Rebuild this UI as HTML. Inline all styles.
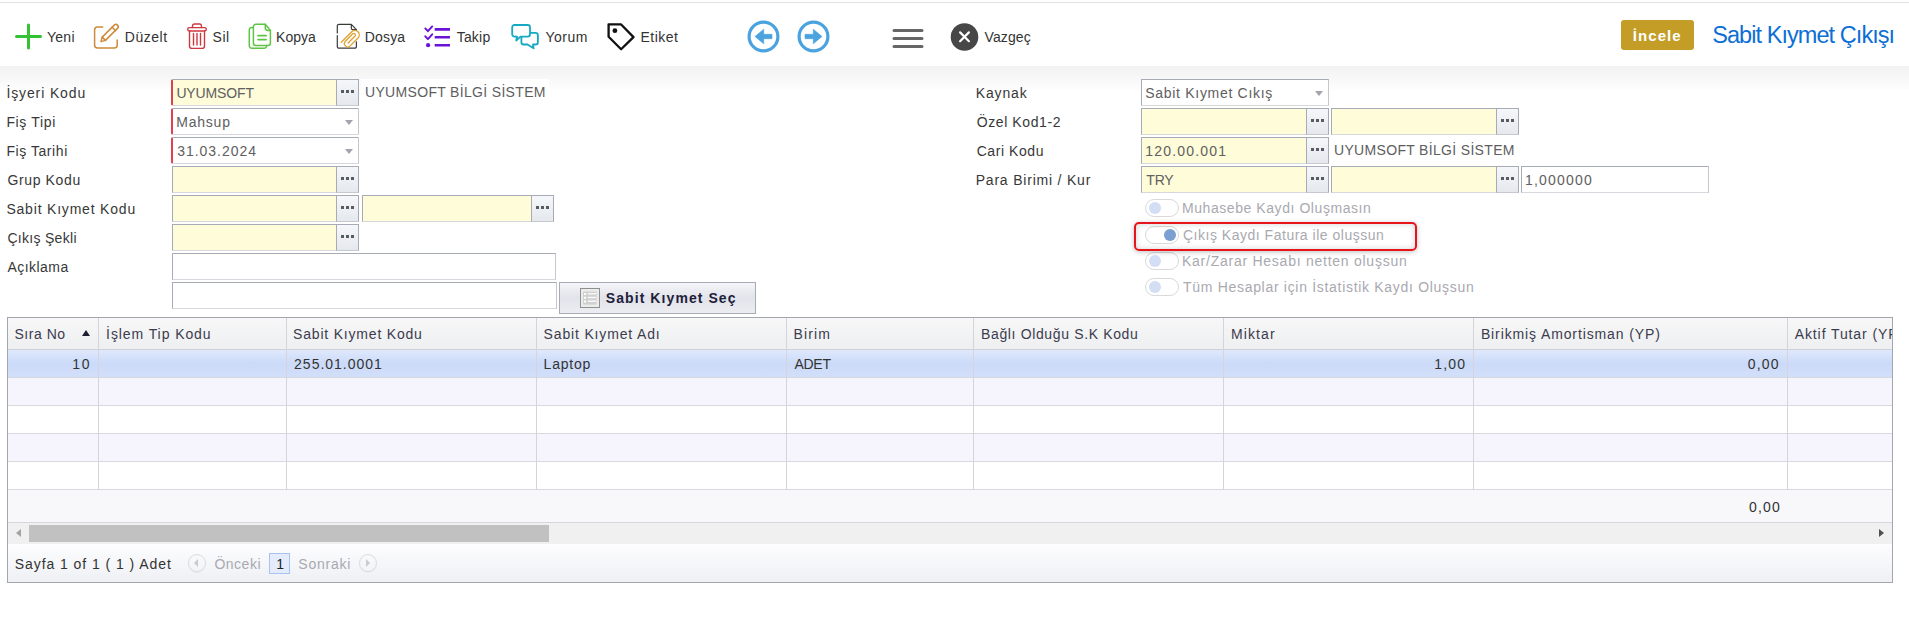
<!DOCTYPE html>
<html><head><meta charset="utf-8">
<style>
*{box-sizing:border-box;margin:0;padding:0}
html,body{width:1909px;height:630px;overflow:hidden;background:#fff;font-family:"Liberation Sans",sans-serif}
.a{position:absolute}
.t{position:absolute;white-space:nowrap}
.fld{position:absolute;height:27px;border:1px solid #a7abb5;border-bottom-color:#d6d8de;border-right-color:#c4c7ce;background:#fff}
.y{background:#fefcd9}
.req{border-left:2px solid #e0414f;border-radius:2px 0 0 2px}
.btn{position:absolute;top:-1px;right:-1px;width:23px;height:27px;border:1px solid #a7abb5;border-bottom-color:#c6c9cf;background:linear-gradient(#f5f7fa,#e5e8ed)}
.btn i{position:absolute;top:10px;width:3px;height:3px;background:#575c64}
.arr{position:absolute;right:5px;top:11px;width:0;height:0;border-left:4px solid transparent;border-right:4px solid transparent;border-top:5px solid #a2a4ab}
.col{position:absolute;top:318px;width:1px;height:172px;background:#d4d5da}
.tg{position:absolute;left:1145px;width:34px;height:18px;border:1px solid #d9d9d9;border-radius:9px;background:#fff}
.tg i{position:absolute;top:2px;left:3px;width:12px;height:12px;border-radius:6px;background:#d3def5}
</style></head><body>
<div class="a" style="left:0px;top:2px;width:1909px;height:1px;background:#e0e2e0"></div>
<div class="a" style="left:0px;top:66px;width:1909px;height:24px;background:linear-gradient(#f2f2f2,#fdfdfd)"></div>
<svg class="a" style="left:14px;top:22px" width="29" height="29" viewBox="0 0 29 29"><path d="M14.5 3v23M2.5 14.5h24" stroke="#33c233" stroke-width="3" stroke-linecap="round"/></svg>
<div class="t" style="left:47.0px;top:30.1px;font-size:14px;line-height:14px;color:#333;font-weight:normal;letter-spacing:0.267px;">Yeni</div>
<svg class="a" style="left:92px;top:22px" width="30" height="30" viewBox="0 0 30 30" fill="none" stroke="#cd8a3a" stroke-width="1.5" stroke-linecap="round" stroke-linejoin="round"><path d="M10.7 4.9H5.6A3 3 0 0 0 2.6 7.9V23A3 3 0 0 0 5.6 26H22.2A3 3 0 0 0 25.2 23V18"/><path d="M9 19.6L10.2 15.14L22.22 3.12A2.3 2.3 0 0 1 25.48 6.38L13.46 18.4Z"/><path d="M20.1 5.24L23.36 8.5M10.2 15.14L13.46 18.4"/></svg>
<div class="t" style="left:124.8px;top:30.1px;font-size:14px;line-height:14px;color:#333;font-weight:normal;letter-spacing:0.52px;">Düzelt</div>
<svg class="a" style="left:186px;top:23px" width="22" height="27" viewBox="0 0 22 27" fill="none" stroke="#cc3a40" stroke-width="1.4" stroke-linejoin="round" stroke-linecap="round"><rect x="1.7" y="4.6" width="18.6" height="3.4" rx="1.7"/><path d="M6.5 4.6V3A2 2 0 0 1 8.5 1H14A2 2 0 0 1 15.5 3V4.6"/><path d="M3.5 8V23A2.4 2.4 0 0 0 5.9 25.4H16.1A2.4 2.4 0 0 0 18.5 23V8"/><path d="M7.5 10.5V22M11 10.5V22M14.5 10.5V22"/></svg>
<div class="t" style="left:212.6px;top:30.1px;font-size:14px;line-height:14px;color:#333;font-weight:normal;letter-spacing:0.5px;">Sil</div>
<svg class="a" style="left:248px;top:23px" width="25" height="27" viewBox="0 0 25 27" fill="none" stroke="#5ec444" stroke-width="1.5" stroke-linejoin="round" stroke-linecap="round"><path d="M5.4 4.6H3.8A2.5 2.5 0 0 0 1.3 7.1V22.7A2.5 2.5 0 0 0 3.8 25.2H16.1A2.5 2.5 0 0 0 18.6 22.7V22.4"/><path d="M7.9 1.3H17.3L22.4 7.4V19.9A2.5 2.5 0 0 1 19.9 22.4H7.9A2.5 2.5 0 0 1 5.4 19.9V3.8A2.5 2.5 0 0 1 7.9 1.3Z"/><path d="M17.3 1.3V5A2.4 2.4 0 0 0 19.7 7.4H22.4"/><path d="M10 12.7H18.1M10 16.6H18.1" stroke-width="1.7"/></svg>
<div class="t" style="left:276.0px;top:30.1px;font-size:14px;line-height:14px;color:#333;font-weight:normal;letter-spacing:0.05px;">Kopya</div>
<svg class="a" style="left:336px;top:23px" width="25" height="27" viewBox="0 0 25 27" fill="none" stroke-linecap="round" stroke-linejoin="round"><path d="M1.3 10V3A1.7 1.7 0 0 1 3 1.3H15.3L20.4 6.6V7.5M1.3 12.5V23.5A1.7 1.7 0 0 0 3 25.2H18.7A1.7 1.7 0 0 0 20.4 23.5V18.8M15.3 1.3V5A1.6 1.6 0 0 0 16.9 6.6H20.4" stroke="#3a3a3a" stroke-width="1.2"/><path d="M5.23 19.23L15.77 8.7A4.45 4.45 0 0 1 22.06 14.99L14.14 22.91A3.35 3.35 0 0 1 9.4 18.17L16.76 10.82A1.6 1.6 0 0 1 19.02 13.08L12.09 20.01" stroke="#e0a030" stroke-width="1.3"/></svg>
<div class="t" style="left:364.8px;top:30.1px;font-size:14px;line-height:14px;color:#333;font-weight:normal;letter-spacing:0.15px;">Dosya</div>
<svg class="a" style="left:424px;top:25px" width="27" height="23" viewBox="0 0 27 23" fill="none" stroke="#6a12d8"><path d="M10.7 4.4H26M10.7 12.3H26M10.7 20.2H26" stroke-width="2.6"/><path d="M1.3 3.4L3.9 6.2L8.2 1.4M1.3 11.3L3.9 14.1L8.2 9.3" stroke-width="1.9" stroke-linecap="round" stroke-linejoin="round"/><circle cx="4.1" cy="20.2" r="2.1" fill="#6a12d8" stroke="none"/></svg>
<div class="t" style="left:456.7px;top:30.1px;font-size:14px;line-height:14px;color:#333;font-weight:normal;letter-spacing:0.2px;">Takip</div>
<svg class="a" style="left:510px;top:23px" width="30" height="27" viewBox="0 0 30 27" fill="#fff" stroke="#14aac1" stroke-width="1.8" stroke-linejoin="round"><path d="M13.7 9.8H25.6A2.3 2.3 0 0 1 27.9 12.1V19.2A2.3 2.3 0 0 1 25.6 21.5H23L23.6 25.3L17.5 21.5H13.7A2.3 2.3 0 0 1 11.4 19.2V12.1A2.3 2.3 0 0 1 13.7 9.8Z"/><path d="M4.5 2H17.7A2.3 2.3 0 0 1 20 4.3V11.3A2.3 2.3 0 0 1 17.7 13.6H10.5L6.2 17.5L7 13.6H4.5A2.3 2.3 0 0 1 2.2 11.3V4.3A2.3 2.3 0 0 1 4.5 2Z"/></svg>
<div class="t" style="left:545.5px;top:30.1px;font-size:14px;line-height:14px;color:#333;font-weight:normal;letter-spacing:0.475px;">Yorum</div>
<svg class="a" style="left:606px;top:22px" width="30" height="30" viewBox="0 0 30 30" fill="none" stroke="#111" stroke-width="2.3" stroke-linejoin="round"><path d="M2.6 2.3H14.9L27.5 15.1L15.1 27.3L2.6 14.8Z"/><circle cx="8.9" cy="8.7" r="2.4" fill="#111" stroke="none"/></svg>
<div class="t" style="left:640.5px;top:30.1px;font-size:14px;line-height:14px;color:#333;font-weight:normal;letter-spacing:0.5px;">Etiket</div>
<svg class="a" style="left:746px;top:19px" width="35" height="35" viewBox="0 0 35 35"><circle cx="17.5" cy="17.5" r="14.4" fill="none" stroke="#4aa3df" stroke-width="3.2"/><path d="M9 17.5L17.7 10.2V15.3H26V19.7H17.7V24.8Z" fill="#4aa3df" stroke="#4aa3df" stroke-width="0.6" stroke-linejoin="round"/></svg>
<svg class="a" style="left:796px;top:19px" width="35" height="35" viewBox="0 0 35 35"><circle cx="17.5" cy="17.5" r="14.4" fill="none" stroke="#4aa3df" stroke-width="3.2"/><path d="M26 17.5L17.3 10.2V15.3H9V19.7H17.3V24.8Z" fill="#4aa3df" stroke="#4aa3df" stroke-width="0.6" stroke-linejoin="round"/></svg>
<svg class="a" style="left:892px;top:28px" width="32" height="21" viewBox="0 0 32 21" stroke="#666" stroke-width="3" stroke-linecap="round"><path d="M2 2.5h28M2 10.5h28M2 18.5h28"/></svg>
<svg class="a" style="left:950px;top:23px" width="29" height="29" viewBox="0 0 29 29"><circle cx="14.5" cy="14" r="13.8" fill="#474747"/><path d="M10.1 9.4L18.9 18.2M18.9 9.4L10.1 18.2" stroke="#fff" stroke-width="2.2" stroke-linecap="round"/></svg>
<div class="t" style="left:984.6px;top:30.1px;font-size:14px;line-height:14px;color:#333;font-weight:normal;letter-spacing:0.08px;">Vazgeç</div>
<div class="a" style="left:1621px;top:20px;width:73px;height:30px;background:#c49d27;border-radius:3px"></div>
<div class="t" style="left:1632.8px;top:28.4px;font-size:15px;line-height:15px;color:#fff;font-weight:bold;letter-spacing:1.06px;">İncele</div>
<div class="t" style="left:1712.2px;top:23.9px;font-size:23.5px;line-height:23.5px;color:#0c6fd5;font-weight:normal;letter-spacing:-0.936px;">Sabit Kıymet Çıkışı</div>
<div class="t" style="left:6.4px;top:86.1px;font-size:14px;line-height:14px;color:#383838;font-weight:normal;letter-spacing:0.88px;">İşyeri Kodu</div>
<div class="t" style="left:6.4px;top:115.1px;font-size:14px;line-height:14px;color:#383838;font-weight:normal;letter-spacing:0.651px;">Fiş Tipi</div>
<div class="t" style="left:6.4px;top:144.1px;font-size:14px;line-height:14px;color:#383838;font-weight:normal;letter-spacing:0.566px;">Fiş Tarihi</div>
<div class="t" style="left:7.4px;top:173.1px;font-size:14px;line-height:14px;color:#383838;font-weight:normal;letter-spacing:0.638px;">Grup Kodu</div>
<div class="t" style="left:6.4px;top:202.1px;font-size:14px;line-height:14px;color:#383838;font-weight:normal;letter-spacing:0.804px;">Sabit Kıymet Kodu</div>
<div class="t" style="left:7.4px;top:231.1px;font-size:14px;line-height:14px;color:#383838;font-weight:normal;letter-spacing:0.3px;">Çıkış Şekli</div>
<div class="t" style="left:7.4px;top:260.1px;font-size:14px;line-height:14px;color:#383838;font-weight:normal;letter-spacing:0.465px;">Açıklama</div>
<div class="fld y req" style="left:171px;top:79px;width:188px"><div class="btn"><i style="left:4px"></i><i style="left:9px"></i><i style="left:14px"></i></div></div>
<div class="t" style="left:176.4px;top:85.9px;font-size:14px;line-height:14px;color:#606060;font-weight:normal;letter-spacing:-0.142px;">UYUMSOFT</div>
<div class="a" style="left:361px;top:79px;width:188px;height:14px;background:#fff"></div>
<div class="t" style="left:365.0px;top:85.1px;font-size:14px;line-height:14px;color:#5e5e5e;font-weight:normal;letter-spacing:0.325px;">UYUMSOFT BİLGİ SİSTEM</div>
<div class="fld req" style="left:171px;top:108px;width:188px"><div class="arr"></div></div>
<div class="t" style="left:176.2px;top:114.9px;font-size:14px;line-height:14px;color:#606060;font-weight:normal;letter-spacing:0.8px;">Mahsup</div>
<div class="fld req" style="left:171px;top:137px;width:188px"><div class="arr"></div></div>
<div class="t" style="left:177.2px;top:143.9px;font-size:14px;line-height:14px;color:#606060;font-weight:normal;letter-spacing:0.97px;">31.03.2024</div>
<div class="fld y" style="left:172px;top:166px;width:187px"><div class="btn"><i style="left:4px"></i><i style="left:9px"></i><i style="left:14px"></i></div></div>
<div class="fld y" style="left:172px;top:195px;width:187px"><div class="btn"><i style="left:4px"></i><i style="left:9px"></i><i style="left:14px"></i></div></div>
<div class="fld y" style="left:362px;top:195px;width:192px"><div class="btn"><i style="left:4px"></i><i style="left:9px"></i><i style="left:14px"></i></div></div>
<div class="fld y" style="left:172px;top:224px;width:187px"><div class="btn"><i style="left:4px"></i><i style="left:9px"></i><i style="left:14px"></i></div></div>
<div class="fld " style="left:172px;top:253px;width:384px"></div>
<div class="fld " style="left:172px;top:282px;width:385px"></div>
<div class="a" style="left:559px;top:282px;width:197px;height:32px;border:1px solid #a7abb5;background:linear-gradient(#f4f5f8,#e2e4eb 50%,#ebedf1)"></div>
<svg class="a" style="left:580px;top:288px" width="20" height="20" viewBox="0 0 20 20"><rect x="0.5" y="0.5" width="19" height="19" fill="#ececec" stroke="#8f8f8f"/><rect x="3" y="3.6" width="13.6" height="13" fill="#d0d0d0"/><path d="M4 6h2.1M4 9.8h2.1M4 13.6h2.1" stroke="#fff" stroke-width="2"/><path d="M7.8 5.7h8.3M7.8 9.5h8.3M7.8 13.3h8.3" stroke="#f8f8f8" stroke-width="1.5"/></svg>
<div class="t" style="left:605.8px;top:291.2px;font-size:14px;line-height:14px;color:#1e1e3a;font-weight:bold;letter-spacing:1.075px;">Sabit Kıymet Seç</div>
<div class="t" style="left:975.7px;top:86.1px;font-size:14px;line-height:14px;color:#383838;font-weight:normal;letter-spacing:0.86px;">Kaynak</div>
<div class="t" style="left:976.7px;top:115.1px;font-size:14px;line-height:14px;color:#383838;font-weight:normal;letter-spacing:0.6px;">Özel Kod1-2</div>
<div class="t" style="left:976.7px;top:144.1px;font-size:14px;line-height:14px;color:#383838;font-weight:normal;letter-spacing:0.563px;">Cari Kodu</div>
<div class="t" style="left:975.7px;top:173.1px;font-size:14px;line-height:14px;color:#383838;font-weight:normal;letter-spacing:0.798px;">Para Birimi / Kur</div>
<div class="fld " style="left:1141px;top:79px;width:188px"><div class="arr"></div></div>
<div class="t" style="left:1145.3px;top:85.9px;font-size:14px;line-height:14px;color:#606060;font-weight:normal;letter-spacing:0.697px;">Sabit Kıymet Cıkış</div>
<div class="fld y" style="left:1141px;top:108px;width:188px"><div class="btn"><i style="left:4px"></i><i style="left:9px"></i><i style="left:14px"></i></div></div>
<div class="fld y" style="left:1331px;top:108px;width:188px"><div class="btn"><i style="left:4px"></i><i style="left:9px"></i><i style="left:14px"></i></div></div>
<div class="fld y" style="left:1141px;top:137px;width:188px"><div class="btn"><i style="left:4px"></i><i style="left:9px"></i><i style="left:14px"></i></div></div>
<div class="t" style="left:1145.3px;top:143.9px;font-size:14px;line-height:14px;color:#606060;font-weight:normal;letter-spacing:1.187px;">120.00.001</div>
<div class="t" style="left:1334.0px;top:143.1px;font-size:14px;line-height:14px;color:#5e5e5e;font-weight:normal;letter-spacing:0.325px;">UYUMSOFT BİLGİ SİSTEM</div>
<div class="fld y" style="left:1141px;top:166px;width:188px"><div class="btn"><i style="left:4px"></i><i style="left:9px"></i><i style="left:14px"></i></div></div>
<div class="t" style="left:1146.3px;top:172.9px;font-size:14px;line-height:14px;color:#606060;font-weight:normal;letter-spacing:-0.2px;">TRY</div>
<div class="fld y" style="left:1331px;top:166px;width:188px"><div class="btn"><i style="left:4px"></i><i style="left:9px"></i><i style="left:14px"></i></div></div>
<div class="fld " style="left:1521px;top:166px;width:188px"></div>
<div class="t" style="left:1525.0px;top:172.9px;font-size:14px;line-height:14px;color:#606060;font-weight:normal;letter-spacing:1.202px;">1,000000</div>
<div class="tg" style="top:199px"><i></i></div>
<div class="t" style="left:1182.0px;top:200.6px;font-size:14px;line-height:14px;color:#a9a9b0;font-weight:normal;letter-spacing:0.564px;">Muhasebe Kaydı Oluşmasın</div>
<div class="tg" style="top:226px"><i style="left:18px;background:#7a9fd1"></i></div>
<div class="t" style="left:1183.0px;top:228.1px;font-size:14px;line-height:14px;color:#a9a9b0;font-weight:normal;letter-spacing:0.513px;">Çıkış Kaydı Fatura ile oluşsun</div>
<div class="tg" style="top:252px"><i></i></div>
<div class="t" style="left:1182.0px;top:253.9px;font-size:14px;line-height:14px;color:#a9a9b0;font-weight:normal;letter-spacing:0.746px;">Kar/Zarar Hesabı netten oluşsun</div>
<div class="tg" style="top:278px"><i></i></div>
<div class="t" style="left:1183.0px;top:279.8px;font-size:14px;line-height:14px;color:#a9a9b0;font-weight:normal;letter-spacing:0.695px;">Tüm Hesaplar için İstatistik Kaydı Oluşsun</div>
<div class="a" style="left:1134px;top:222px;width:283px;height:29px;border:2px solid #e8141c;border-radius:5px;box-shadow:0 1px 5px rgba(0,0,0,0.25),inset 0 0 6px rgba(0,0,0,0.18)"></div>
<div class="a" style="left:7px;top:317px;width:1886px;height:266px;border:1px solid #a3a6b0;background:#fff"></div>
<div class="a" style="left:8px;top:318px;width:1884px;height:31px;background:linear-gradient(#f7f7f8,#eeeff0)"></div>
<div class="a" style="left:8px;top:349px;width:1884px;height:1px;background:#d0d1d6"></div>
<div class="a" style="left:8px;top:350px;width:1884px;height:27px;background:linear-gradient(#dfe9fd,#cbdaf8 50%,#d2dffa)"></div>
<div class="a" style="left:8px;top:377px;width:1884px;height:1px;background:#d8d9de"></div>
<div class="a" style="left:8px;top:378px;width:1884px;height:27px;background:#f6f4fd"></div>
<div class="a" style="left:8px;top:405px;width:1884px;height:1px;background:#d8d9de"></div>
<div class="a" style="left:8px;top:406px;width:1884px;height:27px;background:#fff"></div>
<div class="a" style="left:8px;top:433px;width:1884px;height:1px;background:#d8d9de"></div>
<div class="a" style="left:8px;top:434px;width:1884px;height:27px;background:#f6f4fd"></div>
<div class="a" style="left:8px;top:461px;width:1884px;height:1px;background:#d8d9de"></div>
<div class="a" style="left:8px;top:462px;width:1884px;height:27px;background:#fff"></div>
<div class="a" style="left:8px;top:489px;width:1884px;height:1px;background:#d8d9de"></div>
<div class="col" style="left:98px"></div>
<div class="col" style="left:286px"></div>
<div class="col" style="left:536px"></div>
<div class="col" style="left:786px"></div>
<div class="col" style="left:973px"></div>
<div class="col" style="left:1223px"></div>
<div class="col" style="left:1473px"></div>
<div class="col" style="left:1787px"></div>
<div class="a" style="left:8px;top:490px;width:1884px;height:32px;background:#f8f8fa"></div>
<div class="a" style="left:8px;top:522px;width:1884px;height:1px;background:#d6d7db"></div>
<div class="a" style="left:8px;top:523px;width:1884px;height:21px;background:#f0f0f0"></div>
<div class="a" style="left:29px;top:525px;width:520px;height:17px;background:#c1c1c1"></div>
<div class="a" style="left:16px;top:529px;width:0px;height:0px;border-top:4.5px solid transparent;border-bottom:4.5px solid transparent;border-right:5px solid #a3a3a3"></div>
<div class="a" style="left:1879px;top:529px;width:0px;height:0px;border-top:4.5px solid transparent;border-bottom:4.5px solid transparent;border-left:5px solid #505050"></div>
<div class="a" style="left:8px;top:544px;width:1884px;height:38px;background:linear-gradient(#fdfdfe,#eef0f4)"></div>
<div class="t" style="left:14.4px;top:327.1px;font-size:14px;line-height:14px;color:#3c3c4e;font-weight:normal;letter-spacing:0.551px;">Sıra No</div>
<div class="t" style="left:106.1px;top:327.1px;font-size:14px;line-height:14px;color:#3c3c4e;font-weight:normal;letter-spacing:0.914px;">İşlem Tip Kodu</div>
<div class="t" style="left:293.1px;top:327.1px;font-size:14px;line-height:14px;color:#3c3c4e;font-weight:normal;letter-spacing:0.804px;">Sabit Kıymet Kodu</div>
<div class="t" style="left:543.6px;top:327.1px;font-size:14px;line-height:14px;color:#3c3c4e;font-weight:normal;letter-spacing:0.838px;">Sabit Kıymet Adı</div>
<div class="t" style="left:793.4px;top:327.1px;font-size:14px;line-height:14px;color:#3c3c4e;font-weight:normal;letter-spacing:1.19px;">Birim</div>
<div class="t" style="left:981.0px;top:327.1px;font-size:14px;line-height:14px;color:#3c3c4e;font-weight:normal;letter-spacing:0.64px;">Bağlı Olduğu S.K Kodu</div>
<div class="t" style="left:1231.0px;top:327.1px;font-size:14px;line-height:14px;color:#3c3c4e;font-weight:normal;letter-spacing:1.11px;">Miktar</div>
<div class="t" style="left:1480.9px;top:327.1px;font-size:14px;line-height:14px;color:#3c3c4e;font-weight:normal;letter-spacing:0.881px;">Birikmiş Amortisman (YP)</div>
<div class="a" style="left:1788px;top:318px;width:104px;height:31px;overflow:hidden"><div class="t" style="left:6.7px;top:9.1px;font-size:14px;line-height:14px;color:#3c3c4e;letter-spacing:0.9px">Aktif Tutar (YP)</div></div>
<div class="a" style="left:82px;top:330px;width:0px;height:0px;border-left:4.5px solid transparent;border-right:4.5px solid transparent;border-bottom:6px solid #1e1e30"></div>
<div class="t" style="left:72.3px;top:356.8px;font-size:14px;line-height:14px;color:#333;font-weight:normal;letter-spacing:1.6px;">10</div>
<div class="t" style="left:294.1px;top:356.8px;font-size:14px;line-height:14px;color:#333;font-weight:normal;letter-spacing:0.99px;">255.01.0001</div>
<div class="t" style="left:543.6px;top:356.8px;font-size:14px;line-height:14px;color:#333;font-weight:normal;letter-spacing:0.79px;">Laptop</div>
<div class="t" style="left:794.4px;top:356.8px;font-size:14px;line-height:14px;color:#333;font-weight:normal;letter-spacing:-0.265px;">ADET</div>
<div class="t" style="left:1434.2px;top:356.8px;font-size:14px;line-height:14px;color:#333;font-weight:normal;letter-spacing:1.175px;">1,00</div>
<div class="t" style="left:1747.8px;top:356.8px;font-size:14px;line-height:14px;color:#333;font-weight:normal;letter-spacing:1.179px;">0,00</div>
<div class="t" style="left:1749.0px;top:500.0px;font-size:14px;line-height:14px;color:#333;font-weight:normal;letter-spacing:1.179px;">0,00</div>
<div class="t" style="left:14.7px;top:557.1px;font-size:14px;line-height:14px;color:#333;font-weight:normal;letter-spacing:0.944px;">Sayfa 1 of 1 ( 1 ) Adet</div>
<div class="a" style="left:188px;top:554px;width:18px;height:18px;border:1px solid #dcdce0;border-radius:50%;box-shadow:0 1px 1px rgba(0,0,0,0.05)"></div>
<div class="a" style="left:194px;top:559px;width:0px;height:0px;border-top:4px solid transparent;border-bottom:4px solid transparent;border-right:4px solid #c9c9ce"></div>
<div class="t" style="left:214.4px;top:557.0px;font-size:14px;line-height:14px;color:#a9a9b1;font-weight:normal;letter-spacing:0.51px;">Önceki</div>
<div class="a" style="left:269px;top:553px;width:21px;height:21px;border:1px solid #a9c3ef;background:#e3ebfc"></div>
<div class="t" style="left:276.2px;top:557.0px;font-size:14px;line-height:14px;color:#222;font-weight:normal;letter-spacing:0px;">1</div>
<div class="t" style="left:298.3px;top:557.0px;font-size:14px;line-height:14px;color:#a9a9b1;font-weight:normal;letter-spacing:0.772px;">Sonraki</div>
<div class="a" style="left:359px;top:554px;width:18px;height:18px;border:1px solid #dcdce0;border-radius:50%;box-shadow:0 1px 1px rgba(0,0,0,0.05)"></div>
<div class="a" style="left:366px;top:559px;width:0px;height:0px;border-top:4px solid transparent;border-bottom:4px solid transparent;border-left:4px solid #c9c9ce"></div>
</body></html>
